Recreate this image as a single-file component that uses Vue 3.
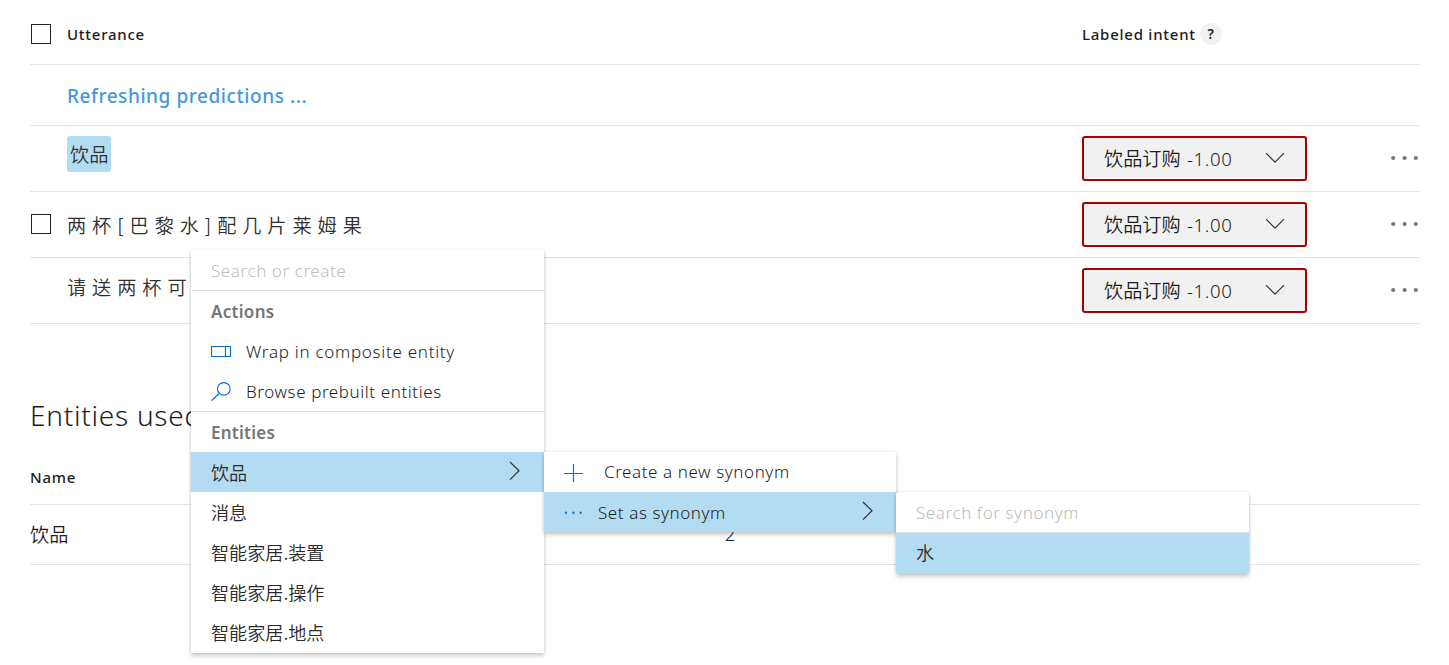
<script setup>
const rows = [
  { text: '饮品', marked: true },
  { text: '两 杯 [ 巴 黎 水 ] 配 几 片 莱 姆 果', check: true },
  { text: '请 送 两 杯 可 乐' },
]
const entities = ['饮品', '消息', '智能家居.装置', '智能家居.操作', '智能家居.地点']
</script>

<template>
  <main class="page">
    <section class="utterances">
      <div class="row head">
        <i class="box"></i>
        <span class="cell label">Utterance</span>
        <span class="intent label"><span>Labeled intent</span><b class="help">?</b></span>
      </div>
      <div class="row refresh">
        <span class="t-refresh">Refreshing predictions ...</span>
      </div>
      <div v-for="(r, i) in rows" :key="i" class="row item">
        <i v-if="r.check" class="box"></i>
        <span v-else class="gap"></span>
        <span class="cell utter" :class="'u' + i"><span :class="{ mark: r.marked }">{{ r.text }}</span></span>
        <div class="intent">
          <div class="select">
            <span class="score">饮品订购 <span class="num">-1.00</span></span>
            <svg width="20" height="12" viewBox="0 0 20 12"><path d="M1 1.2 10 10.2 19 1.2" /></svg>
          </div>
          <svg class="more" width="30" height="6" viewBox="0 0 30 6">
            <circle cx="3.2" cy="3" r="2.1" /><circle cx="14.6" cy="3" r="2.1" /><circle cx="25.8" cy="3" r="2.1" />
          </svg>
        </div>
      </div>
    </section>

    <section class="entities">
      <h2>Entities used</h2>
      <div class="ehead label"><span>Name</span></div>
      <div class="erow"><span class="ename">饮品</span><span class="count">2</span></div>
    </section>

    <div class="menu main-menu">
      <div class="mi search"><span>Search or create</span></div>
      <div class="mi title"><span>Actions</span></div>
      <div class="mi">
        <svg class="ico" width="21" height="20" viewBox="0 0 21 20"><path d="M.5 5.5h19v10H.5zM14.5 5.5v10" /></svg>
        <span class="t-wrap">Wrap in composite entity</span>
      </div>
      <div class="mi">
        <svg class="ico" width="21" height="20" viewBox="0 0 21 20"><circle cx="12.8" cy="7.9" r="6.3" /><path d="M8.3 12.3.6 19.7" /></svg>
        <span>Browse prebuilt entities</span>
      </div>
      <div class="mi title sep"><span class="t-entities">Entities</span></div>
      <div v-for="(e, i) in entities" :key="e" class="mi cjk" :class="{ active: i === 0 }">
        <span>{{ e }}</span>
        <svg v-if="i === 0" class="chev" width="11" height="20" viewBox="0 0 11 20"><path d="M1 1 10 9.8 1 18.6" /></svg>
      </div>
    </div>

    <div class="menu sub-menu">
      <div class="mi">
        <svg class="ico plus" width="20" height="20" viewBox="0 0 20 20"><path d="M0 11.5h19M9.5 2v18" /></svg>
        <span class="t-create">Create a new synonym</span>
      </div>
      <div class="mi active">
        <svg class="ico dots" width="20" height="4" viewBox="0 0 20 4"><circle cx="2" cy="2.7" r="1.2" /><circle cx="9.4" cy="2.7" r="1.2" /><circle cx="16.6" cy="2.7" r="1.2" /></svg>
        <span>Set as synonym</span>
        <svg class="chev" width="11" height="20" viewBox="0 0 11 20"><path d="M1 1 10 9.8 1 18.6" /></svg>
      </div>
    </div>

    <div class="menu synonym-menu">
      <div class="mi search"><span>Search for synonym</span></div>
      <div class="mi cjk active last"><span>水</span></div>
    </div>
  </main>
</template>

<style>
body { margin: 0; background: #fff; }
</style>

<style scoped>
* { box-sizing: border-box; }
.page {
  position: relative;
  width: 1449px;
  height: 665px;
  overflow: hidden;
  padding: 0 29px 0 30px;
  color: #1c1c1c;
  font-family: "Noto Sans", "Noto Sans CJK SC", sans-serif;
  font-size: 17px;
  font-weight: 350;
  white-space: nowrap;
}
svg { display: block; flex: none; fill: none; stroke: #333; stroke-width: 1.2; }
.row { display: flex; align-items: center; height: 66px; border-bottom: 1px solid #e4e4e4; }
.head { height: 65px; padding-top: 4px; }
.refresh { height: 61px; padding: 2px 0 0 37px; }
.box { flex: none; width: 20px; height: 20px; margin: 0 16px 1px 1px; border: 1px solid #22222c; }
.gap { width: 37px; }
.cell { flex: 1; }
.label { font-size: 15px; font-weight: 550; letter-spacing: .75px; }
.intent { display: flex; align-items: center; width: 338px; }
.help { width: 22px; height: 22px; margin-left: 4px; border-radius: 50%; background: #f1f1f1; text-align: center; font-size: 14px; font-weight: 600; letter-spacing: 0; line-height: 22px; }
.t-refresh { color: #4598dc; font-size: 19px; font-weight: 550; letter-spacing: .57px; }
.utter { font-family: "Noto Sans CJK SC", sans-serif; color: #303030; font-size: 19.2px; line-height: 28px; word-spacing: 1.65px; }
.u0 { padding-bottom: 10px; }
.u2 { padding-bottom: 8px; }
.u1 { padding-bottom: 0; }
.mark { display: inline-block; height: 36px; padding: 0 3px; border-radius: 3px; background: #b3dbf2; line-height: 36px; }
.select { display: flex; align-items: center; justify-content: space-between; width: 225px; height: 45px; padding: 0 20px 2px 20px; border: 2px solid #a80000; border-radius: 3px; background: #f1f1f1; box-shadow: inset 0 -1px #fff; }
.score { font-family: "Noto Sans CJK SC", sans-serif; font-size: 19.2px; }
.num { margin-left: 2px; font-family: "Noto Sans", sans-serif; font-size: 18.6px; letter-spacing: .6px; }
.more { margin: 0 0 2px 83px; fill: #777; stroke: none; }
.entities h2 { height: 124px; margin: 0; padding-top: 71px; font-size: 28px; font-weight: 350; line-height: 40px; letter-spacing: .75px; }
.ehead { display: flex; align-items: center; height: 57px; padding-top: 2px; border-bottom: 1px solid #e4e4e4; }
.erow { display: flex; align-items: center; height: 60px; padding-bottom: 1px; border-bottom: 1px solid #e4e4e4; font-size: 19.2px; }
.ename { width: 695px; font-family: "Noto Sans CJK SC", sans-serif; }
.count { font-size: 18px; }
.menu { position: absolute; width: 353px; background: #fff; box-shadow: 0 3px 4px rgba(0,0,0,.18), 0 0 3px rgba(0,0,0,.12); letter-spacing: .58px; }
.main-menu { left: 191px; top: 250px; height: 403px; }
.sub-menu { left: 544px; top: 452px; width: 352px; }
.synonym-menu { left: 896px; top: 492px; border-radius: 3px; }
.mi { display: flex; align-items: center; height: 40px; padding: 0 23px 0 20px; }
.search { height: 41px; border-bottom: 1px solid #e1e1e1; color: #bcbcbc; }
.title { color: #767676; font-weight: 600; letter-spacing: .3px; }
.sep { height: 41px; border-top: 1px solid #e1e1e1; }
.t-wrap { letter-spacing: .72px; }
.t-entities { letter-spacing: .25px; }
.t-create { padding-bottom: 2px; }
.cjk { font-family: "Noto Sans CJK SC", sans-serif; font-size: 18.1px; letter-spacing: 0; color: #2a2a2a; }
.cjk span { padding-bottom: 1px; }
.active { background: #b3dbf2; }
.last { height: 41px; border-radius: 0 0 3px 3px; }
.last span { padding-bottom: 3px; }
.chev { margin: 0 0 2px auto; }
.main-menu .chev { margin-right: 1px; }
.ico { margin-right: 14px; stroke: #0f6cd0; }
.plus { margin-right: 20px; }
.dots { margin-right: 14px; fill: #1a73d0; stroke: none; }
</style>
